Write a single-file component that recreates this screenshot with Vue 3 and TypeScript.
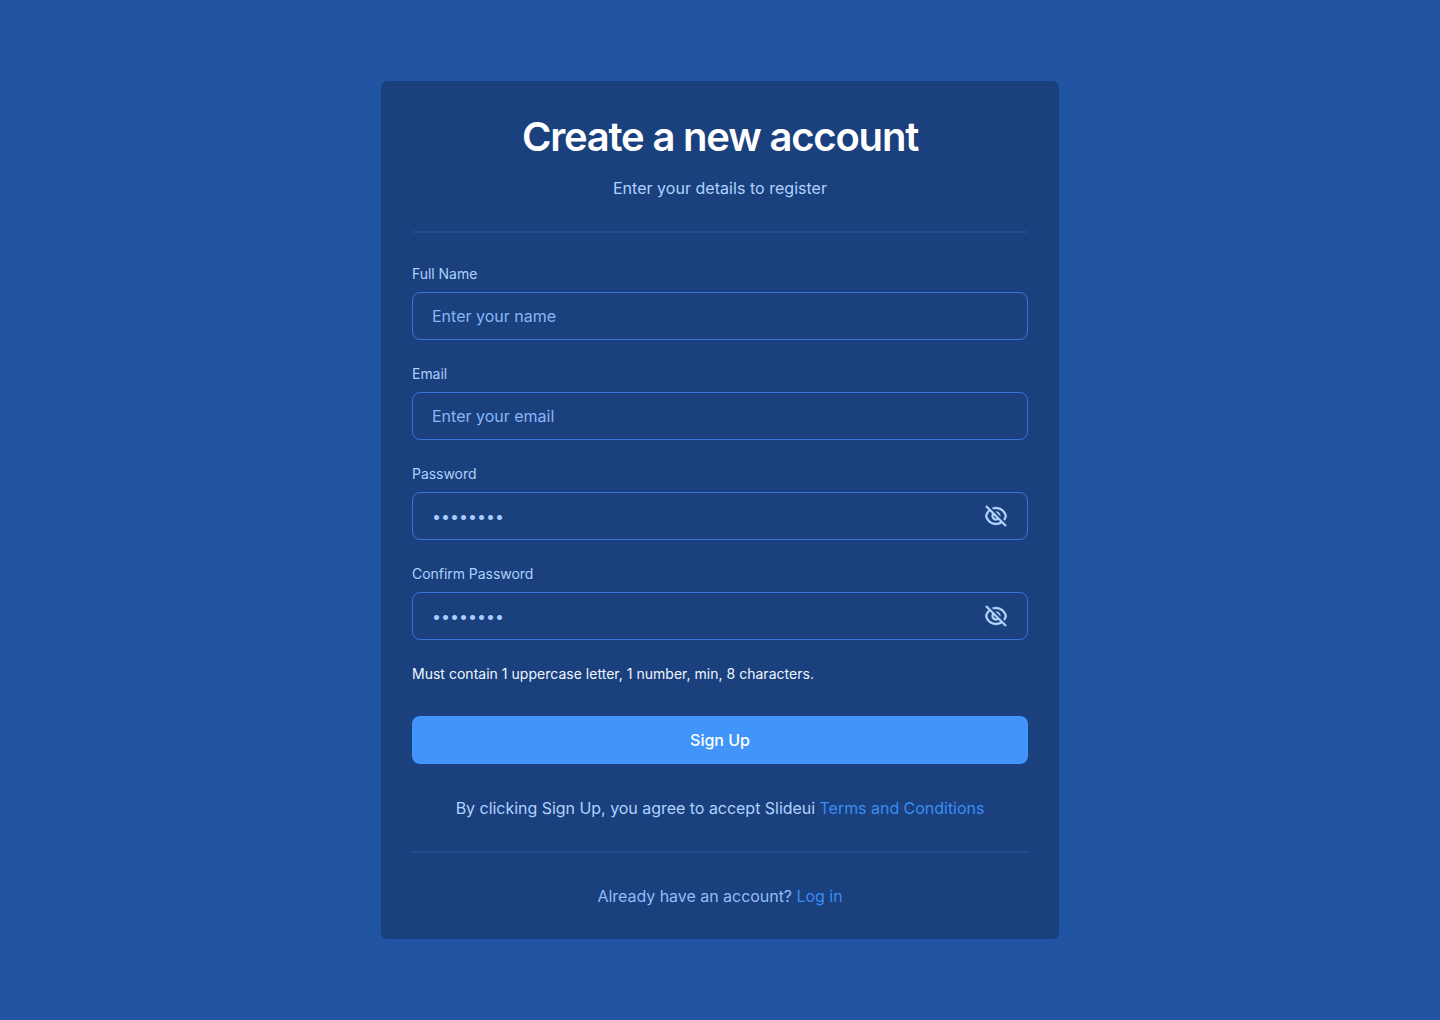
<script setup lang="ts">
import { reactive } from 'vue'

interface Field {
  id: string
  label: string
  placeholder: string
  secret: boolean
}

const fields: Field[] = [
  { id: 'name', label: 'Full Name', placeholder: 'Enter your name', secret: false },
  { id: 'email', label: 'Email', placeholder: 'Enter your email', secret: false },
  { id: 'password', label: 'Password', placeholder: '••••••••', secret: true },
  { id: 'confirm', label: 'Confirm Password', placeholder: '••••••••', secret: true },
]

const values = reactive<Record<string, string>>({ name: '', email: '', password: '', confirm: '' })
const visible = reactive<Record<string, boolean>>({ password: false, confirm: false })
</script>

<template>
  <main class="page">
    <form class="card" @submit.prevent>
      <header class="head">
        <h1 class="title">Create a new account</h1>
        <p class="subtitle">Enter your details to register</p>
      </header>
      <div class="divider"></div>
      <div class="fields">
        <div v-for="f in fields" :key="f.id" class="field">
          <label class="label" :for="f.id">{{ f.label }}</label>
          <div class="control">
            <input
              :id="f.id"
              v-model="values[f.id]"
              class="input"
              :class="{ secret: f.secret }"
              :type="f.secret && !visible[f.id] ? 'password' : 'text'"
              :placeholder="f.placeholder"
            />
            <button
              v-if="f.secret"
              type="button"
              class="toggle"
              aria-label="Toggle visibility"
              @click="visible[f.id] = !visible[f.id]"
            >
              <svg width="24" height="24" viewBox="0 0 24 24" fill="currentColor" stroke="currentColor" stroke-width="0.3">
                <path d="M17.8827 19.2968C16.1814 20.3755 14.1638 21.0002 12.0003 21.0002C6.60812 21.0002 2.12215 17.1204 1.18164 12.0002C1.61832 9.62282 2.81932 7.5129 4.52047 5.93457L1.39366 2.80777L2.80788 1.39355L22.6069 21.1925L21.1927 22.6068L17.8827 19.2968ZM5.9356 7.3497C4.60673 8.56015 3.6378 10.1672 3.22278 12.0002C4.14022 16.0521 7.7646 19.0002 12.0003 19.0002C13.5997 19.0002 15.112 18.5798 16.4243 17.8384L14.396 15.8101C13.7023 16.2472 12.8808 16.5002 12.0003 16.5002C9.51498 16.5002 7.50026 14.4854 7.50026 12.0002C7.50026 11.1196 7.75317 10.2981 8.19031 9.60442L5.9356 7.3497ZM12.9139 14.328L9.67246 11.0866C9.5613 11.3696 9.50026 11.6777 9.50026 12.0002C9.50026 13.3809 10.6196 14.5002 12.0003 14.5002C12.3227 14.5002 12.6309 14.4391 12.9139 14.328ZM20.8068 16.5925L19.376 15.1617C20.0319 14.2268 20.5154 13.1586 20.7777 12.0002C19.8603 7.94818 16.2359 5.00016 12.0003 5.00016C11.1544 5.00016 10.3329 5.11773 9.55249 5.33818L7.97446 3.76015C9.22127 3.26959 10.5793 3.00016 12.0003 3.00016C17.3924 3.00016 21.8784 6.87992 22.8189 12.0002C22.5067 13.6998 21.8038 15.2628 20.8068 16.5925ZM11.7229 7.50857C11.8146 7.50299 11.9071 7.50016 12.0003 7.50016C14.4855 7.50016 16.5003 9.51488 16.5003 12.0002C16.5003 12.0933 16.4974 12.1858 16.4919 12.2775L11.7229 7.50857Z" />
              </svg>
            </button>
          </div>
        </div>
        <p class="hint">Must contain 1 uppercase letter, 1 number, min, 8 characters.</p>
      </div>
      <button class="submit" type="submit">Sign Up</button>
      <p class="terms">By clicking Sign Up, you agree to accept Slideui <a class="link">Terms and Conditions</a></p>
      <div class="divider"></div>
      <p class="login">Already have an account? <a class="link">Log in</a></p>
    </form>
  </main>
</template>

<style>
body {
  background: #2154a3;
}
</style>

<style scoped>
.page {
  box-sizing: border-box;
  min-height: 1020px;
  display: flex;
  justify-content: center;
  align-items: center;
  background: #2154a3;
  font-family: Inter, 'Liberation Sans', sans-serif;
  font-size: 16px;
  line-height: 24px;
}
.card {
  box-sizing: border-box;
  width: 678px;
  padding: 31px;
  display: flex;
  flex-direction: column;
  gap: 32px;
  border-radius: 6px;
  background: #1a407d;
}
.head {
  display: flex;
  flex-direction: column;
  gap: 15px;
  text-align: center;
}
.title,
.subtitle,
.hint,
.terms,
.login {
  margin: 0;
}
.title {
  padding-top: 1px;
  color: #fff;
  font-size: 40px;
  font-weight: 600;
  line-height: 48px;
  letter-spacing: -1.2px;
}
.subtitle {
  color: #b0d3ff;
  letter-spacing: 0.03px;
}
.divider {
  height: 2px;
  margin: -1px 0;
  background: #214c8c;
}
.fields {
  display: flex;
  flex-direction: column;
  gap: 24px;
}
.field {
  display: flex;
  flex-direction: column;
  gap: 8px;
}
.label {
  color: #add0fc;
  font-size: 14px;
  line-height: 20px;
  letter-spacing: -0.04px;
}
.control {
  box-sizing: border-box;
  height: 48px;
  padding: 0 19px;
  display: flex;
  align-items: center;
  border: 1px solid #3a72d6;
  border-radius: 8px;
}
.input {
  flex: 1;
  min-width: 0;
  height: 24px;
  padding: 0;
  border: 0;
  outline: 0;
  background: transparent;
  color: #a9cdff;
  font: inherit;
}
.input::placeholder {
  color: #8ab6f5;
  opacity: 1;
}
.input.secret::placeholder {
  color: #a9cdff;
}
.toggle {
  display: flex;
  padding: 0;
  border: 0;
  background: none;
  color: #b5d7ff;
  cursor: pointer;
}
.hint {
  color: #f0f6ff;
  font-size: 14px;
  line-height: 20px;
  letter-spacing: 0.02px;
}
.submit {
  height: 48px;
  padding: 0;
  border: 0;
  border-radius: 8px;
  background: #4194f9;
  color: #fff;
  font: inherit;
  font-weight: 500;
  cursor: pointer;
}
.terms,
.login {
  text-align: center;
  letter-spacing: -0.03px;
}
.terms {
  color: #b0d3ff;
}
.login {
  color: #91bdf8;
}
.link {
  color: #3b8df2;
}
</style>
